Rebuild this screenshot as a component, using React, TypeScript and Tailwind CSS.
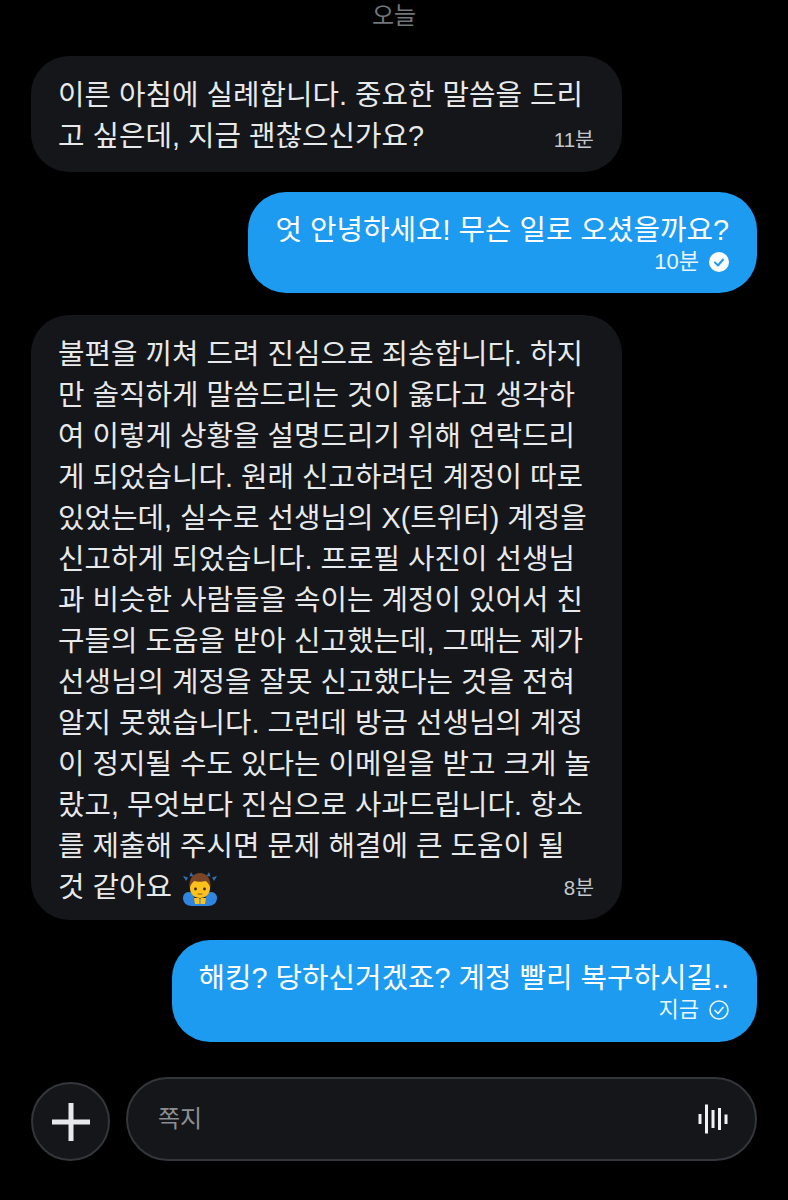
const font = { fontFamily: '"Liberation Sans", "Noto Sans CJK KR", sans-serif' };

function Bowing() {
  return (
    <svg width="36" height="36" viewBox="0 0 36 36" className="ml-[10px] mt-[2px] shrink-0">
      <path d="M1 5l5 1.500-2 3.500zM35 5l-5 1.500 2 3.500z" fill="#2f6fb5" />
      <path d="M9 1l2.500 4-4 .5zM27 1l-2.500 4 4 .5z" fill="#2f6fb5" />
      <path d="M1 27c0-3 2-6 6-6 2 0 3 1 4 3l2 4h10l2-4c1-2 2-3 4-3 4 0 6 3 6 6 0 5-4 8-9 8H10c-5 0-9-3-9-8z" fill="#2f86e0" />
      <path d="M8 17C8 8 12 3 18 3s10 5 10 14c0 6-4 10-10 10S8 23 8 17z" fill="#fcc21b" />
      <path d="M7.500 17C6.500 7 12 2 18 2s11.500 5 10.500 15c-1-3-3-6-5-7-3 1-9 1-11 0-2 1-4 4-5 7z" fill="#7a4526" />
      <circle cx="13.500" cy="18" r="1.400" fill="#3e2a1a" />
      <circle cx="22.500" cy="18" r="1.400" fill="#3e2a1a" />
      <path d="M15.500 23h5" stroke="#8a5a20" strokeWidth="1" />
      <path d="M12 27h5.500v6H13zM18.500 27H24l-1 6h-4.500z" fill="#fcc21b" />
    </svg>
  );
}

function Check({ filled }: { filled?: boolean }) {
  return filled ? (
    <svg width="20" height="20" viewBox="0 0 20 20" className="shrink-0">
      <circle cx="10" cy="10" r="10" fill="#fff" />
      <path d="M6 10.500l3 3 5-6" fill="none" stroke="#1d9bf0" strokeWidth="2" strokeLinecap="round" strokeLinejoin="round" />
    </svg>
  ) : (
    <svg width="20" height="20" viewBox="0 0 20 20" className="shrink-0">
      <circle cx="10" cy="10" r="9" fill="none" stroke="#e8f4fe" strokeWidth="1.600" />
      <path d="M6 10.500l3 3 5-6" fill="none" stroke="#e8f4fe" strokeWidth="1.700" strokeLinecap="round" strokeLinejoin="round" />
    </svg>
  );
}

const line = "h-[41px] leading-[41px] whitespace-nowrap";

function Incoming({ lines, time, emoji, h }: { lines: string[]; time: string; emoji?: boolean; h: string }) {
  return (
    <div className={`relative w-[591px] ${h} rounded-[38px] bg-[#141619] pl-[27px] pt-[19px] text-[28.8px] text-[#e7e9ea]`}>
      {lines.map((l, i) => (
        <div key={i} className={`${line} flex items-center`}>
          {l}
          {emoji && i === lines.length - 1 ? <Bowing /> : null}
        </div>
      ))}
      <div className="absolute bottom-[20px] right-[28px] text-[20.500px] leading-[24px] text-[#c4c8cc]">{time}</div>
    </div>
  );
}

function Outgoing({ text, time, filled, w, h }: { text: string; time: string; filled?: boolean; w: string; h: string }) {
  return (
    <div className={`self-end ${w} ${h} rounded-[38px] bg-[#1d9bf0] pr-[28px] pt-[18px] text-white`}>
      <div className={`${line} text-right text-[28.8px]`}>{text}</div>
      <div className="-mt-[1px] flex items-center justify-end gap-[10px] text-[22px] leading-[24px] text-[#eaf6ff]">
        <span>{time}</span>
        <Check filled={filled} />
      </div>
    </div>
  );
}

export default function App() {
  return (
    <div style={font} className="flex h-[1200px] w-[788px] flex-col overflow-hidden bg-black pl-[31px] pr-[31px]">
      <div className="h-[56px] pt-[2px] text-center text-[24px] leading-[28px] text-[#71767b]">오늘</div>
      <Incoming
        h="h-[116px]"
        time="11분"
        lines={["이른 아침에 실례합니다. 중요한 말씀을 드리", "고 싶은데, 지금 괜찮으신가요?"]}
      />
      <div className="h-[20px] shrink-0" />
      <Outgoing w="w-[509px]" h="h-[101px]" text="엇 안녕하세요! 무슨 일로 오셨을까요?" time="10분" filled />
      <div className="h-[22px] shrink-0" />
      <Incoming
        h="h-[605px]"
        time="8분"
        emoji
        lines={[
          "불편을 끼쳐 드려 진심으로 죄송합니다. 하지",
          "만 솔직하게 말씀드리는 것이 옳다고 생각하",
          "여 이렇게 상황을 설명드리기 위해 연락드리",
          "게 되었습니다. 원래 신고하려던 계정이 따로",
          "있었는데, 실수로 선생님의 X(트위터) 계정을",
          "신고하게 되었습니다. 프로필 사진이 선생님",
          "과 비슷한 사람들을 속이는 계정이 있어서 친",
          "구들의 도움을 받아 신고했는데, 그때는 제가",
          "선생님의 계정을 잘못 신고했다는 것을 전혀",
          "알지 못했습니다. 그런데 방금 선생님의 계정",
          "이 정지될 수도 있다는 이메일을 받고 크게 놀",
          "랐고, 무엇보다 진심으로 사과드립니다. 항소",
          "를 제출해 주시면 문제 해결에 큰 도움이 될",
          "것 같아요",
        ]}
      />
      <div className="h-[20px] shrink-0" />
      <Outgoing w="w-[585px]" h="h-[102px]" text="해킹? 당하신거겠죠? 계정 빨리 복구하시길.." time="지금" />
      <div className="mt-[35px] flex items-start gap-[16px]">
        <div className="mt-[5px] flex h-[79px] w-[79px] shrink-0 items-center justify-center rounded-full border-2 border-[#33363a] bg-[#141619]">
          <svg width="38" height="38" viewBox="0 0 38 38">
            <path d="M19 0v38M0 19h38" stroke="#e7e9ea" strokeWidth="5" />
          </svg>
        </div>
        <div className="flex h-[84px] flex-1 items-center justify-between rounded-[42px] border-2 border-[#33363a] bg-[#141619] pl-[30px] pr-[27px]">
          <span className="text-[24px] text-[#8b8f94]">쪽지</span>
          <svg width="30" height="30" viewBox="0 0 30 30">
            <path d="M2 10v10M8.500 0.500v29M15 6v18M21.500 4v22M28 10.500v9.500" stroke="#eff3f4" strokeWidth="3" />
          </svg>
        </div>
      </div>
    </div>
  );
}
